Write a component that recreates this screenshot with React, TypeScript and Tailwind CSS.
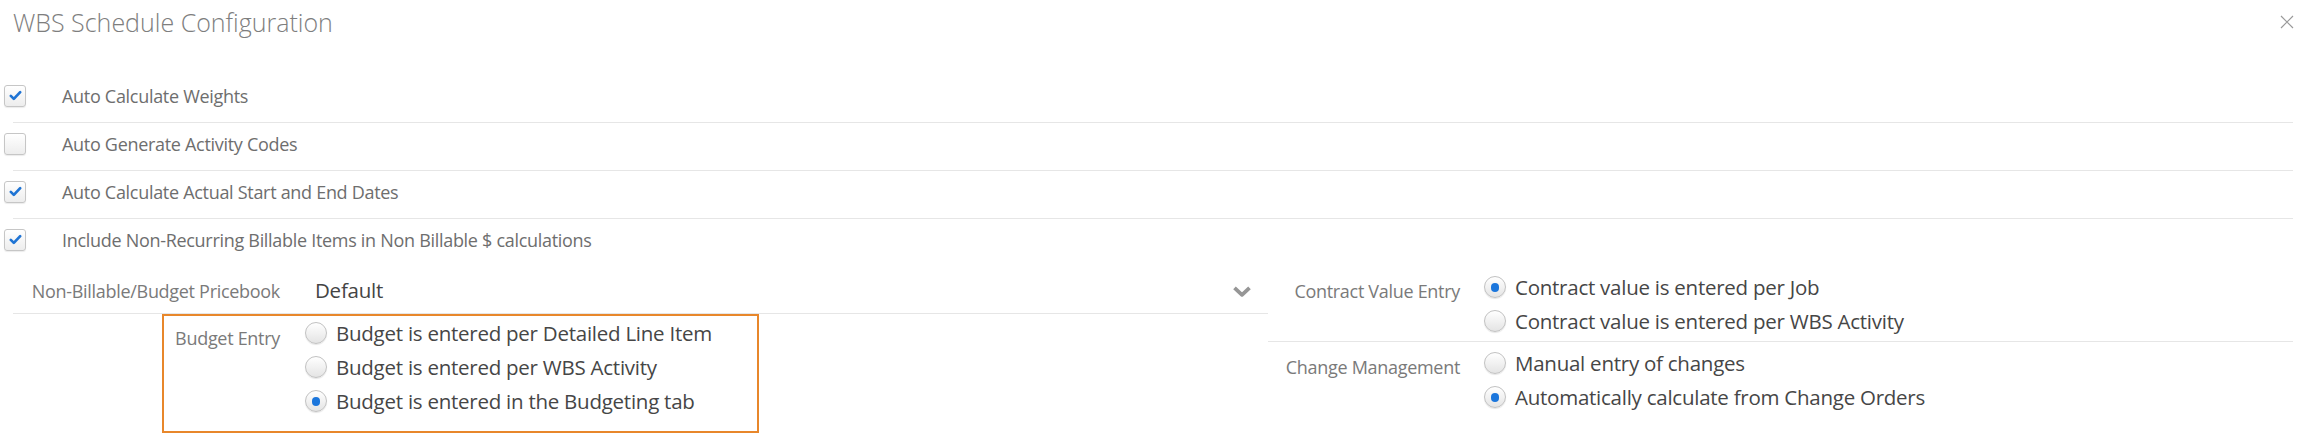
import React from 'react';

const checks = [
  { label: 'Auto Calculate Weights', checked: true },
  { label: 'Auto Generate Activity Codes', checked: false },
  { label: 'Auto Calculate Actual Start and End Dates', checked: true },
  { label: 'Include Non-Recurring Billable Items in Non Billable $ calculations', checked: true },
];

const Checkbox = ({ checked }: { checked: boolean }) => (
  <span className="flex h-[22px] w-[22px] shrink-0 items-center justify-center rounded-[3px] border border-[#c6c6c6] bg-linear-to-b from-white to-[#ededed] shadow-[0_1px_1px_rgba(0,0,0,0.08)]">
    {checked && (
      <svg viewBox="0 0 16 16" className="h-[15px] w-[15px]">
        <path d="M3 8.4l3.2 3.2L13 4.4" fill="none" stroke="#1f74d4" strokeWidth="2.9" strokeLinecap="round" strokeLinejoin="round" />
      </svg>
    )}
  </span>
);

const Radio = ({ checked, label }: { checked: boolean; label: string }) => (
  <div className="flex h-[34px] items-center">
    <span className="flex h-[22px] w-[22px] shrink-0 items-center justify-center rounded-full border border-[#c2c2c2] bg-linear-to-b from-white to-[#e4e4e4] shadow-[0_1px_1px_rgba(0,0,0,0.1)]">
      {checked && <span className="h-[9px] w-[8px] rounded-full bg-[#1b76dc]" />}
    </span>
    <span className="ml-[9px] whitespace-nowrap text-[20.5px] leading-none tracking-[-0.25px] text-[#464646]">{label}</span>
  </div>
);

const Chevron = () => (
  <svg viewBox="0 0 20 12" className="h-[12px] w-[20px]">
    <path d="M2.5 2.8l7.5 7L17.5 2.8" fill="none" stroke="#969696" strokeWidth="3.8" strokeLinejoin="round" />
  </svg>
);

const label = 'whitespace-nowrap text-right text-[18px] tracking-[-0.3px] text-[#7a7a7a]';

const App = () => {
  return (
    <div className="h-[435px] w-[2306px] overflow-hidden bg-white font-['Open_Sans','Noto_Sans',sans-serif]">
      <header className="flex h-[75px] items-start justify-between">
        <h1 className="pl-[13px] pt-[5px] text-[25px] leading-[34px] font-light text-[#7e7e7e]">
          WBS Schedule Configuration
        </h1>
        <button className="mr-[12px] mt-[15px] h-[14px] w-[14px]">
          <svg viewBox="0 0 14 14" className="h-[14px] w-[14px]">
            <path d="M1 1l12 12M13 1L1 13" stroke="#9a9a9a" strokeWidth="1.2" />
          </svg>
        </button>
      </header>

      <div>
        {checks.map((c, i) => (
          <div key={c.label}>
            {i > 0 && <div className="mx-[13px] h-px bg-[#e6e6e6]" />}
            <div className="flex h-[47px] items-center pb-[6px] pl-[4px]">
              <Checkbox checked={c.checked} />
              <span className="ml-[36px] whitespace-nowrap text-[18px] leading-none tracking-[-0.3px] text-[#6e6e6e]">{c.label}</span>
            </div>
          </div>
        ))}
      </div>

      <div className="flex">
        <div className="w-[1268px] shrink-0">
          <div className="ml-[13px] flex h-[48px] items-center border-b border-[#e6e6e6] pt-[2px]">
            <span className={`w-[267px] leading-none ${label}`}>Non-Billable/Budget Pricebook</span>
            <div className="ml-[25px] flex flex-1 items-center justify-between pl-[10px] pr-[16px]">
              <span className="text-[20.5px] leading-none tracking-[-0.25px] text-[#444]">Default</span>
              <Chevron />
            </div>
          </div>
          <div className="ml-[162px] flex h-[119px] w-[597px] border-2 border-[#e8872b]">
            <span className={`w-[116px] shrink-0 pt-[5px] leading-[34px] ${label}`}>Budget Entry</span>
            <div className="ml-[25px] flex flex-col">
              <Radio checked={false} label="Budget is entered per Detailed Line Item" />
              <Radio checked={false} label="Budget is entered per WBS Activity" />
              <Radio checked label="Budget is entered in the Budgeting tab" />
            </div>
          </div>
        </div>

        <div className="mr-[13px] flex-1">
          <div className="flex border-b border-[#e6e6e6] pb-[3px] pt-[4px]">
            <span className={`w-[192px] shrink-0 pt-[4px] leading-[34px] ${label}`}>Contract Value Entry</span>
            <div className="ml-[24px] flex flex-col">
              <Radio checked label="Contract value is entered per Job" />
              <Radio checked={false} label="Contract value is entered per WBS Activity" />
            </div>
          </div>
          <div className="flex pt-[4px]">
            <span className={`w-[192px] shrink-0 pt-[4px] leading-[34px] ${label}`}>Change Management</span>
            <div className="ml-[24px] flex flex-col">
              <Radio checked={false} label="Manual entry of changes" />
              <Radio checked label="Automatically calculate from Change Orders" />
            </div>
          </div>
        </div>
      </div>
    </div>
  );
};

export default App;
